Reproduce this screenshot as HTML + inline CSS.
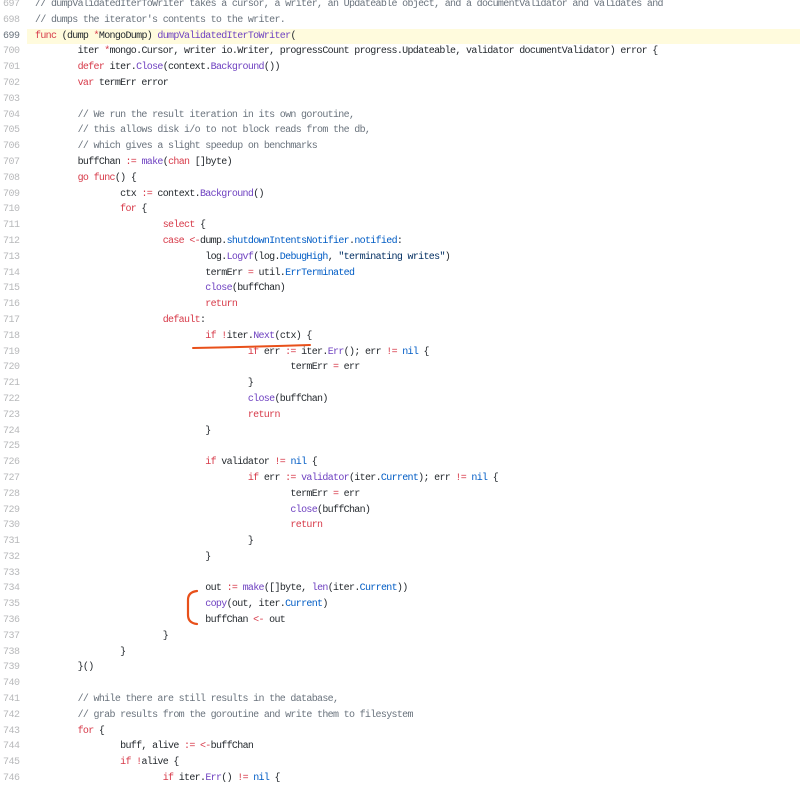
<!DOCTYPE html>
<html><head><meta charset="utf-8"><style>
body{margin:0;width:800px;height:788px;overflow:hidden;background:#fff;position:relative}
.code{position:absolute;left:0;top:-3px;width:800px;font-family:"Liberation Mono",monospace;font-size:10px;letter-spacing:-0.68px;line-height:15.8px;color:#24292e}
.l{height:15.8px;white-space:pre;tab-size:8;-moz-tab-size:8;position:relative}
.n{position:absolute;left:3px;color:#b8b9bb;letter-spacing:-0.5px}
.t{position:absolute;left:35px}
.hl{background:#fffbdd;margin-left:27px}
.hl .n{left:-24px;color:#6a737d}
.hl .t{left:8px}
.c{color:#6a737d}.k{color:#d73a49}.f{color:#6f42c1}.b{color:#005cc5}.s{color:#032f62}
</style></head><body>
<div class="code">
<div class="l"><span class="n">697</span><span class="t c">// dumpValidatedIterToWriter takes a cursor, a writer, an Updateable object, and a documentValidator and validates and</span></div>
<div class="l"><span class="n">698</span><span class="t c">// dumps the iterator's contents to the writer.</span></div>
<div class="l hl"><span class="n">699</span><span class="t"><span class="k">func</span> (dump <span class="k">*</span>MongoDump) <span class="f">dumpValidatedIterToWriter</span>(</span></div>
<div class="l"><span class="n">700</span><span class="t">	iter <span class="k">*</span>mongo.Cursor, writer io.Writer, progressCount progress.Updateable, validator documentValidator) error {</span></div>
<div class="l"><span class="n">701</span><span class="t">	<span class="k">defer</span> iter.<span class="f">Close</span>(context.<span class="f">Background</span>())</span></div>
<div class="l"><span class="n">702</span><span class="t">	<span class="k">var</span> termErr error</span></div>
<div class="l"><span class="n">703</span><span class="t"></span></div>
<div class="l"><span class="n">704</span><span class="t c">	// We run the result iteration in its own goroutine,</span></div>
<div class="l"><span class="n">705</span><span class="t c">	// this allows disk i/o to not block reads from the db,</span></div>
<div class="l"><span class="n">706</span><span class="t c">	// which gives a slight speedup on benchmarks</span></div>
<div class="l"><span class="n">707</span><span class="t">	buffChan <span class="k">:=</span> <span class="f">make</span>(<span class="k">chan</span> []byte)</span></div>
<div class="l"><span class="n">708</span><span class="t">	<span class="k">go</span> <span class="k">func</span>() {</span></div>
<div class="l"><span class="n">709</span><span class="t">		ctx <span class="k">:=</span> context.<span class="f">Background</span>()</span></div>
<div class="l"><span class="n">710</span><span class="t">		<span class="k">for</span> {</span></div>
<div class="l"><span class="n">711</span><span class="t">			<span class="k">select</span> {</span></div>
<div class="l"><span class="n">712</span><span class="t">			<span class="k">case</span> <span class="k">&lt;-</span>dump.<span class="b">shutdownIntentsNotifier</span>.<span class="b">notified</span>:</span></div>
<div class="l"><span class="n">713</span><span class="t">				log.<span class="f">Logvf</span>(log.<span class="b">DebugHigh</span>, <span class="s">"terminating writes"</span>)</span></div>
<div class="l"><span class="n">714</span><span class="t">				termErr <span class="k">=</span> util.<span class="b">ErrTerminated</span></span></div>
<div class="l"><span class="n">715</span><span class="t">				<span class="f">close</span>(buffChan)</span></div>
<div class="l"><span class="n">716</span><span class="t">				<span class="k">return</span></span></div>
<div class="l"><span class="n">717</span><span class="t">			<span class="k">default</span>:</span></div>
<div class="l"><span class="n">718</span><span class="t">				<span class="k">if</span> <span class="k">!</span>iter.<span class="f">Next</span>(ctx) {</span></div>
<div class="l"><span class="n">719</span><span class="t">					<span class="k">if</span> err <span class="k">:=</span> iter.<span class="f">Err</span>(); err <span class="k">!=</span> <span class="b">nil</span> {</span></div>
<div class="l"><span class="n">720</span><span class="t">						termErr <span class="k">=</span> err</span></div>
<div class="l"><span class="n">721</span><span class="t">					}</span></div>
<div class="l"><span class="n">722</span><span class="t">					<span class="f">close</span>(buffChan)</span></div>
<div class="l"><span class="n">723</span><span class="t">					<span class="k">return</span></span></div>
<div class="l"><span class="n">724</span><span class="t">				}</span></div>
<div class="l"><span class="n">725</span><span class="t"></span></div>
<div class="l"><span class="n">726</span><span class="t">				<span class="k">if</span> validator <span class="k">!=</span> <span class="b">nil</span> {</span></div>
<div class="l"><span class="n">727</span><span class="t">					<span class="k">if</span> err <span class="k">:=</span> <span class="f">validator</span>(iter.<span class="b">Current</span>); err <span class="k">!=</span> <span class="b">nil</span> {</span></div>
<div class="l"><span class="n">728</span><span class="t">						termErr <span class="k">=</span> err</span></div>
<div class="l"><span class="n">729</span><span class="t">						<span class="f">close</span>(buffChan)</span></div>
<div class="l"><span class="n">730</span><span class="t">						<span class="k">return</span></span></div>
<div class="l"><span class="n">731</span><span class="t">					}</span></div>
<div class="l"><span class="n">732</span><span class="t">				}</span></div>
<div class="l"><span class="n">733</span><span class="t"></span></div>
<div class="l"><span class="n">734</span><span class="t">				out <span class="k">:=</span> <span class="f">make</span>([]byte, <span class="f">len</span>(iter.<span class="b">Current</span>))</span></div>
<div class="l"><span class="n">735</span><span class="t">				<span class="f">copy</span>(out, iter.<span class="b">Current</span>)</span></div>
<div class="l"><span class="n">736</span><span class="t">				buffChan <span class="k">&lt;-</span> out</span></div>
<div class="l"><span class="n">737</span><span class="t">			}</span></div>
<div class="l"><span class="n">738</span><span class="t">		}</span></div>
<div class="l"><span class="n">739</span><span class="t">	}()</span></div>
<div class="l"><span class="n">740</span><span class="t"></span></div>
<div class="l"><span class="n">741</span><span class="t c">	// while there are still results in the database,</span></div>
<div class="l"><span class="n">742</span><span class="t c">	// grab results from the goroutine and write them to filesystem</span></div>
<div class="l"><span class="n">743</span><span class="t">	<span class="k">for</span> {</span></div>
<div class="l"><span class="n">744</span><span class="t">		buff, alive <span class="k">:=</span> <span class="k">&lt;-</span>buffChan</span></div>
<div class="l"><span class="n">745</span><span class="t">		<span class="k">if</span> <span class="k">!</span>alive {</span></div>
<div class="l"><span class="n">746</span><span class="t">			<span class="k">if</span> iter.<span class="f">Err</span>() <span class="k">!=</span> <span class="b">nil</span> {</span></div>
</div>
<svg width="800" height="788" style="position:absolute;left:0;top:0">
<path d="M193 348 Q250 347 310 345" stroke="#e8501a" stroke-width="2" fill="none" stroke-linecap="round"/>
<path d="M197 591 Q188 592 188 600 L188 615 Q188 623 197 624" stroke="#e8501a" stroke-width="2.2" fill="none" stroke-linecap="round"/>
</svg>
</body></html>
